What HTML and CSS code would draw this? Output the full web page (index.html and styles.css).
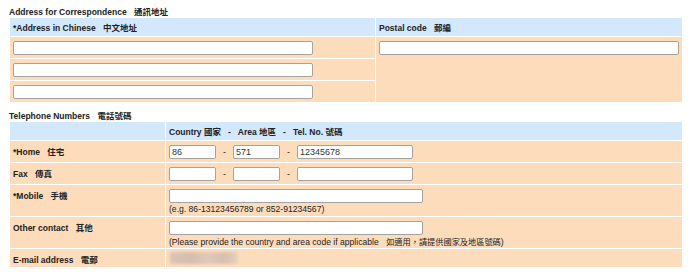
FILE: index.html
```html
<!DOCTYPE html>
<html lang="zh-Hant">
<head>
    <meta charset="UTF-8">
    <title>Contact Details</title>
    <link rel="stylesheet" href="styles.css">
</head>
<body>
    <section class="block">
        <h3 class="block-title">Address for Correspondence <span class="zh">通訊地址</span></h3>
        <table class="form-table">
            <tr>
                <th class="addr-col">*Address in Chinese <span class="zh">中文地址</span></th>
                <th>Postal code <span class="zh">郵編</span></th>
            </tr>
            <tr class="addr-row">
                <td><input type="text" class="addr-input"></td>
                <td rowspan="3" class="postal-cell"><input type="text" class="postal-input"></td>
            </tr>
            <tr class="addr-row">
                <td><input type="text" class="addr-input"></td>
            </tr>
            <tr class="addr-row">
                <td><input type="text" class="addr-input"></td>
            </tr>
        </table>
    </section>

    <section class="block tel-block">
        <h3 class="block-title">Telephone Numbers <span class="zh">電話號碼</span></h3>
        <table class="form-table">
            <tr>
                <th class="label-col"></th>
                <th>Country <span class="zh-s">國家</span><span class="sep">-</span>Area <span class="zh-s">地區</span><span class="sep">-</span>Tel. No. <span class="zh-s">號碼</span></th>
            </tr>
            <tr class="row-short">
                <td class="label">*Home <span class="zh">住宅</span></td>
                <td>
                    <div class="phone">
                        <input type="text" class="code-input" value="86">
                        <span class="dash">-</span>
                        <input type="text" class="code-input" value="571">
                        <span class="dash">-</span>
                        <input type="text" class="tel-input" value="12345678">
                    </div>
                </td>
            </tr>
            <tr class="row-short">
                <td class="label">Fax <span class="zh">傳真</span></td>
                <td>
                    <div class="phone">
                        <input type="text" class="code-input">
                        <span class="dash">-</span>
                        <input type="text" class="code-input">
                        <span class="dash">-</span>
                        <input type="text" class="tel-input">
                    </div>
                </td>
            </tr>
            <tr class="row-tall">
                <td class="label">*Mobile <span class="zh">手機</span></td>
                <td>
                    <input type="text" class="wide-input">
                    <div class="hint">(e.g. 86-13123456789 or 852-91234567)</div>
                </td>
            </tr>
            <tr class="row-tall">
                <td class="label">Other contact <span class="zh">其他</span></td>
                <td>
                    <input type="text" class="wide-input">
                    <div class="hint">(Please provide the country and area code if applicable <span class="hint-zh">如適用，請提供國家及地區號碼</span>)</div>
                </td>
            </tr>
            <tr class="row-mail">
                <td class="label">E-mail address <span class="zh">電郵</span></td>
                <td><div class="blurred"></div></td>
            </tr>
        </table>
    </section>
</body>
</html>
```

FILE: styles.css
```css
* {
    box-sizing: border-box;
}

body {
    margin: 0;
    padding: 5px 5px 0 9px;
    font-family: "Liberation Sans", Arial, "Noto Sans CJK TC", sans-serif;
    font-size: 9px;
    color: #222;
    background: #fff;
}

.block-title {
    margin: 0;
    height: 12px;
    line-height: 12px;
    font-size: 8.5px;
    font-weight: bold;
}

.tel-block {
    margin-top: 6px;
}

.zh,
.zh-s {
    font-family: "Noto Sans CJK TC", sans-serif;
    font-weight: bold;
    margin-left: 5px;
}

.zh-s {
    margin-left: 0;
}

.sep {
    margin: 0 7px;
}

.form-table {
    width: 674px;
    border-spacing: 1px;
}

.form-table th {
    background-color: #d3e7fd;
    height: 18px;
    padding: 0 3px;
    text-align: left;
    font-size: 8.5px;
    font-weight: bold;
    vertical-align: middle;
}

.form-table td {
    background-color: #fddcbc;
    padding: 0 3px;
}

.addr-col {
    width: 367px;
}

.label-col {
    width: 155px;
}

.addr-row td {
    height: 21px;
}

.postal-cell {
    vertical-align: top;
    padding-top: 4px !important;
}

input {
    font-family: "Liberation Sans", Arial, sans-serif;
    font-size: 9px;
    color: #333;
    height: 14px;
    padding: 0 2px;
    margin: 0;
    border: 1px solid #a3a3a3;
    border-radius: 2px;
    background: #fff;
    display: block;
}

.addr-input,
.postal-input {
    width: 300px;
}

.label {
    vertical-align: top;
    padding-top: 4px !important;
    font-size: 8.5px;
    font-weight: bold;
}

.row-short td {
    height: 21px;
}

.row-tall td {
    height: 31px;
    vertical-align: top;
    padding-top: 4px;
}

.row-mail td {
    height: 18px;
}

.phone {
    display: flex;
    align-items: center;
}

.code-input {
    width: 47px;
}

.tel-input {
    width: 116px;
}

.dash {
    width: 17px;
    text-align: center;
}

.wide-input {
    width: 254px;
}

.hint {
    margin-top: 1px;
    line-height: 11px;
    font-size: 8.6px;
}

.hint-zh {
    font-family: "Noto Sans CJK TC", sans-serif;
    font-size: 8.2px;
    margin-left: 5px;
}

.blurred {
    width: 68px;
    height: 12px;
    margin-left: 1px;
    background: linear-gradient(90deg, #dcc4b4 0%, #d6bcab 30%, #e0c9b9 55%, #d8bfae 80%, #e6cfbf 100%);
    filter: blur(1.5px);
}
```
